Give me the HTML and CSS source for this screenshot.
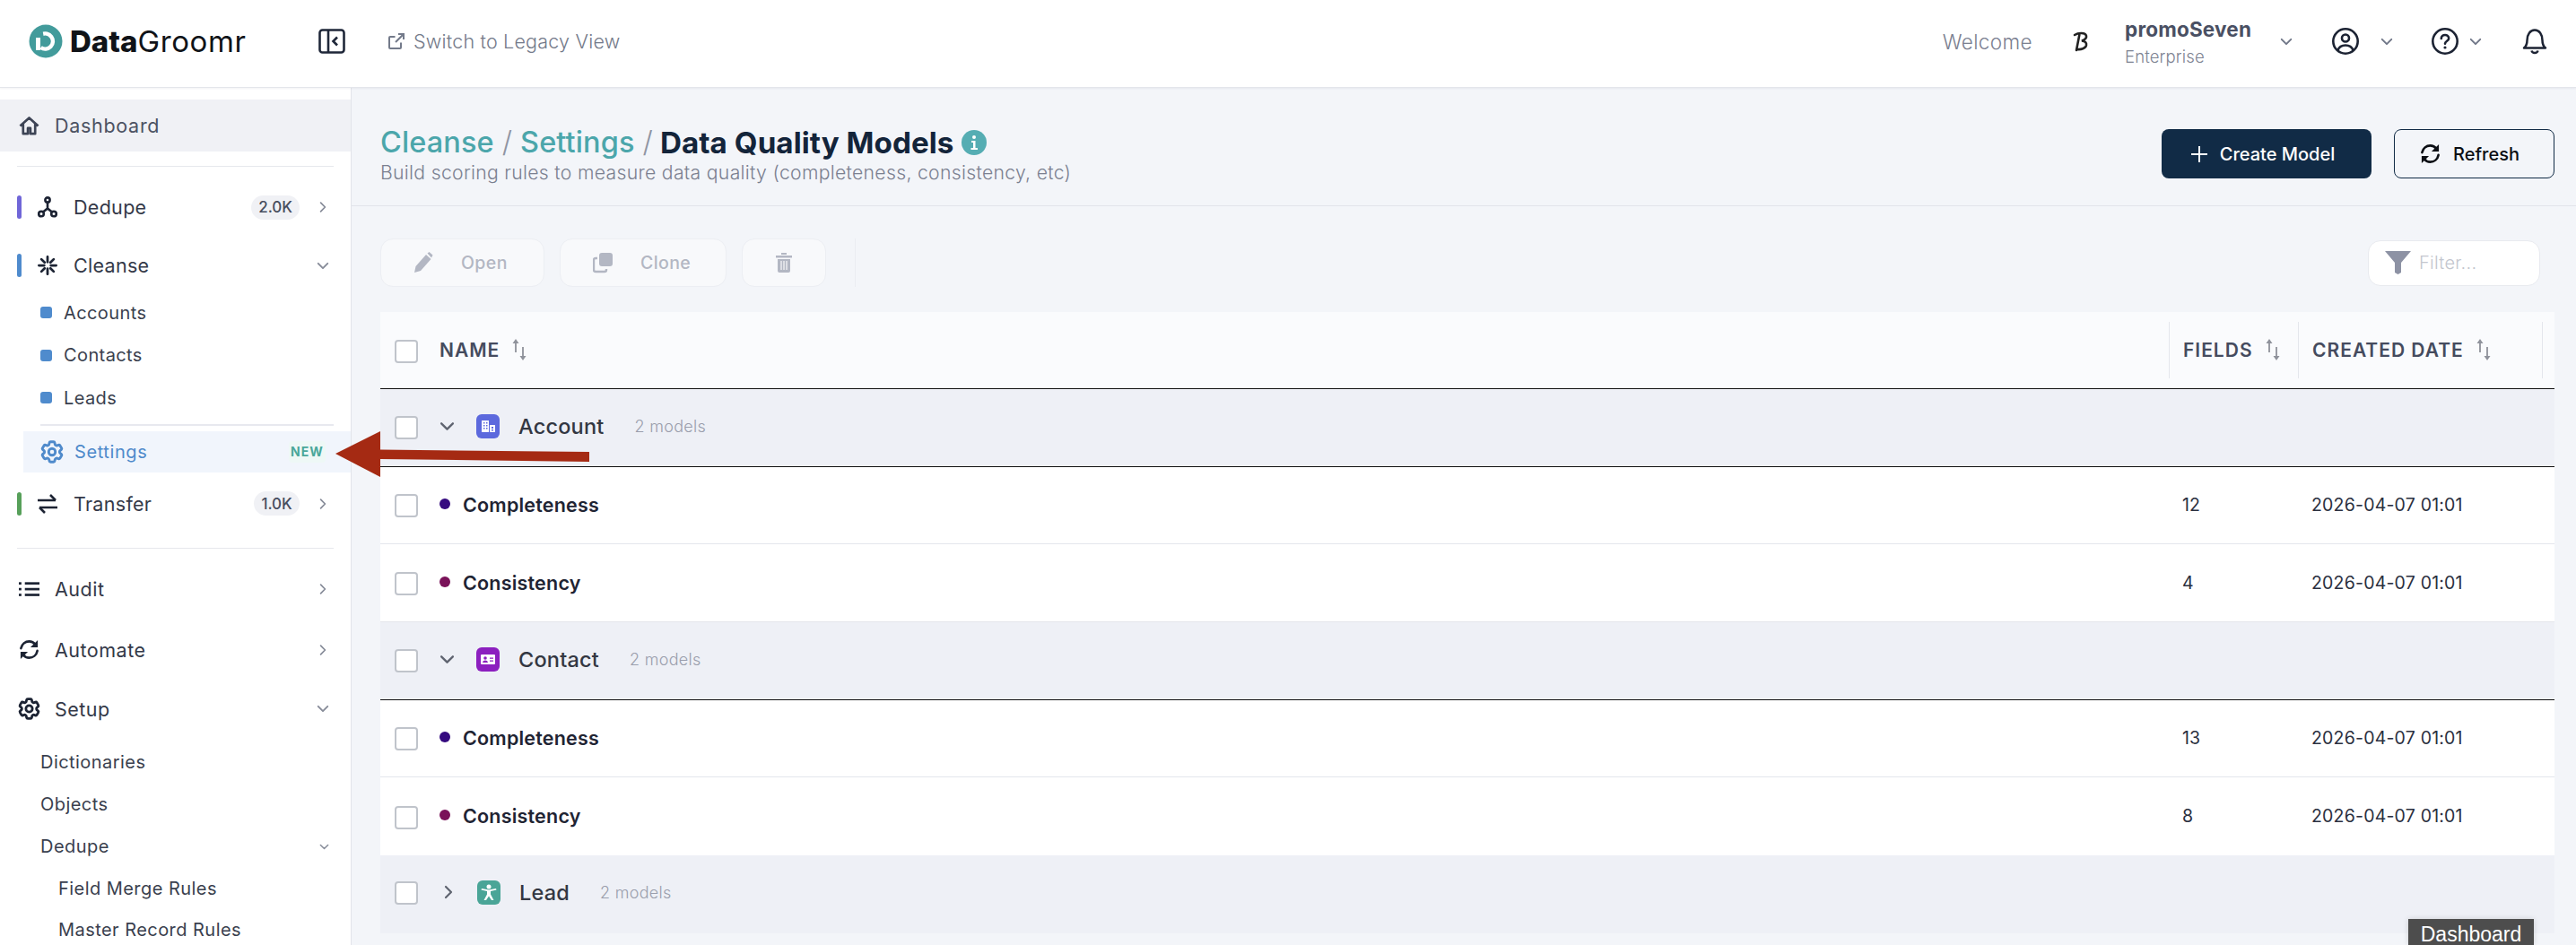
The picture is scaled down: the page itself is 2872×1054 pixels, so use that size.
FILE: index.html
```html
<!DOCTYPE html>
<html lang="en">
<head>
<meta charset="utf-8">
<title>DataGroomr</title>
<link rel="stylesheet" href="styles.css">
</head>
<body>
<svg class="sprite" aria-hidden="true">
  <symbol id="chev-d" viewBox="0 0 16 10"><path d="M2 2l6 6 6-6" fill="none" stroke="currentColor" stroke-width="2.2" stroke-linecap="round" stroke-linejoin="round"/></symbol>
  <symbol id="chev-r" viewBox="0 0 10 16"><path d="M2 2l6 6-6 6" fill="none" stroke="currentColor" stroke-width="2.2" stroke-linecap="round" stroke-linejoin="round"/></symbol>
  <symbol id="gear" viewBox="0 0 24 24"><g fill="none" stroke="currentColor" stroke-width="2.300" stroke-linejoin="round"><path d="M9.594 3.94c.09-.542.56-.94 1.11-.94h2.593c.55 0 1.02.398 1.11.94l.213 1.281c.063.374.313.686.645.87.074.04.147.083.22.127.325.196.72.257 1.075.124l1.217-.456a1.125 1.125 0 0 1 1.37.49l1.296 2.247a1.125 1.125 0 0 1-.26 1.431l-1.003.827c-.293.241-.438.613-.43.992a7.723 7.723 0 0 1 0 .255c-.008.378.137.75.43.991l1.004.827c.424.35.534.955.26 1.43l-1.298 2.247a1.125 1.125 0 0 1-1.369.491l-1.217-.456c-.355-.133-.75-.072-1.076.124a6.47 6.47 0 0 1-.22.128c-.331.183-.581.495-.644.869l-.213 1.281c-.09.543-.56.94-1.11.94h-2.594c-.55 0-1.019-.398-1.11-.94l-.213-1.281c-.062-.374-.312-.686-.644-.87a6.52 6.52 0 0 1-.22-.127c-.325-.196-.72-.257-1.076-.124l-1.217.456a1.125 1.125 0 0 1-1.369-.49l-1.297-2.247a1.125 1.125 0 0 1 .26-1.431l1.004-.827c.292-.24.437-.613.43-.991a6.932 6.932 0 0 1 0-.255c.007-.38-.138-.751-.43-.992l-1.004-.827a1.125 1.125 0 0 1-.26-1.43l1.297-2.247a1.125 1.125 0 0 1 1.37-.491l1.216.456c.356.133.751.072 1.076-.124.072-.044.146-.086.22-.128.332-.183.582-.495.644-.869l.214-1.28Z"/><circle cx="12" cy="12" r="3"/></g></symbol>
  <symbol id="sync" viewBox="0 0 24 24"><g fill="none" stroke="currentColor" stroke-width="2.800" stroke-linecap="round"><path d="M2.500 10.500C3.500 5.500 7.500 2.500 12 2.500c3 0 5.400 1.300 7 3.500"/><path d="M21.500 13.500c-1 5-5 8-9.500 8-3 0-5.400-1.300-7-3.500"/></g><path d="M22 1v8.500h-8.500zM2 23v-8.500h8.500z" fill="currentColor"/></symbol>
  <symbol id="sort" viewBox="0 0 18 24"><g fill="none" stroke="currentColor" stroke-width="1.800"><path d="M5 3v12M13 9v12"/></g><path d="M5 0l3.500 5h-7zM13 24l-3.500-5h7z" fill="currentColor"/></symbol>
  <symbol id="building" viewBox="0 0 26 27"><rect width="26" height="27" rx="6" fill="#5c69dd"/><path d="M6 7h8v13H6zM15 12h6v8h-6z" fill="#fff"/><path d="M8 9h1.500v1.500H8zm3 0h1.500v1.500H11zm-3 3h1.500v1.500H8zm3 0h1.500v1.500H11zm-3 3h1.500v1.500H8zm3 0h1.500v1.500H11zm6-1h2v2h-2zm0 3h2v1.500h-2z" fill="#5c69dd"/></symbol>
  <symbol id="card" viewBox="0 0 26 27"><rect width="26" height="27" rx="6" fill="#8c1fbf"/><rect x="5" y="8" width="16" height="11" rx="1" fill="#fff"/><circle cx="10" cy="12" r="1.800" fill="#8c1fbf"/><path d="M7 17c.4-2 1.500-2.600 3-2.600s2.600.6 3 2.600zM15 11.500h4v1.300h-4zM15 14.500h4v1.300h-4z" fill="#8c1fbf"/></symbol>
  <symbol id="person" viewBox="0 0 26 27"><rect width="26" height="27" rx="6" fill="#4aa597"/><circle cx="13" cy="7" r="2.500" fill="#fff"/><path d="M4.500 10.500l6.500 1.500v3.500L7.500 22h2.500l3-4.500 3 4.500h2.500L15 15.500V12l6.500-1.500-.5-1.500-8 1.500L5 9z" fill="#fff"/></symbol>
</svg>

<header class="topbar">
  <div class="brand">
    <svg class="logo" viewBox="0 0 38 38"><circle cx="19" cy="19" r="18.500" fill="#429b9b"/><path d="M14.500 11.500A8.500 8.500 0 1 1 13.500 26" fill="none" stroke="#fff" stroke-width="4.500"/><path d="M10.500 14v15" stroke="#fff" stroke-width="5"/><path d="M7 15l8.500-7.500L17 15z" fill="#429b9b"/></svg>
    <span class="brand-name"><b>Data</b>Groomr</span>
  </div>
  <svg class="toggle" viewBox="0 0 30 28"><rect x="1.500" y="1.500" width="27" height="25" rx="3" fill="none" stroke="#1f2739" stroke-width="2.600"/><path d="M11 1.500v25" stroke="#1f2739" stroke-width="2.600"/><path d="M21 9.500l-4.500 4.500 4.500 4.500" fill="none" stroke="#1f2739" stroke-width="2.600"/></svg>
  <a class="legacy">
    <svg class="legacy-icon" viewBox="0 0 20 20"><path d="M15 11.500V17a1 1 0 0 1-1 1H3a1 1 0 0 1-1-1V6a1 1 0 0 1 1-1h5.500M12 2h6v6M18 2l-9 9" fill="none" stroke="#737a8a" stroke-width="2"/></svg>
    Switch to Legacy View
  </a>
  <div class="top-right">
    <span class="welcome">Welcome</span>
    <svg class="org-logo" viewBox="0 0 20 24"><path d="M3 5c4-2.500 12-3 13 1 .5 2.500-2 4.500-5 5.500 4 .5 5.500 2 5 5-.7 3.500-6 5-10 4.500M8.500 4L5 22" fill="none" stroke="#222" stroke-width="2.600" stroke-linecap="round"/></svg>
    <div class="org"><span class="org-name">promoSeven</span><span class="org-plan">Enterprise</span></div>
    <svg class="chev top-chev org-chev"><use href="#chev-d"/></svg>
    <svg class="round-icon" viewBox="0 0 30 30"><g fill="none" stroke="#1c2333" stroke-width="2.600"><circle cx="15" cy="15" r="13.700"/><circle cx="15" cy="11.500" r="4"/><path d="M6.500 25c1.500-4 4.500-5.500 8.500-5.500s7 1.500 8.500 5.500"/></g></svg>
    <svg class="chev top-chev user-chev"><use href="#chev-d"/></svg>
    <svg class="round-icon help-icon" viewBox="0 0 30 30"><g fill="none" stroke="#1c2333" stroke-width="2.600"><circle cx="15" cy="15" r="13.700"/><path d="M10.800 12c0-2.500 2-4 4.200-4s4.200 1.400 4.200 3.800c0 3-4.200 3-4.200 6" stroke-linecap="round"/></g><circle cx="15" cy="22" r="1.600" fill="#1c2333"/></svg>
    <svg class="chev top-chev help-chev"><use href="#chev-d"/></svg>
    <svg class="bell" viewBox="0 0 28 30"><path d="M2 22.500c2.500-2 3.500-4 3.500-8.500C5.500 7 9 2.500 14 2.500S22.500 7 22.500 14c0 4.500 1 6.500 3.500 8.500zM10.500 25.500c.5 2 2 2.500 3.500 2.500s3-.5 3.500-2.500" fill="none" stroke="#1c2333" stroke-width="2.500" stroke-linejoin="round"/></svg>
  </div>
</header>

<div class="body">
  <nav class="sidebar">
    <div class="nav-top active">
      <svg class="top-icon home" viewBox="0 0 24 24"><path d="M1.500 12L12 2.500 22.500 12M5 9.500V21h5.500v-6.500h3V21H19V9.500" fill="none" stroke="#3d4455" stroke-width="2.800" stroke-linejoin="round"/></svg>
      <span>Dashboard</span>
    </div>
    <hr class="divider">

    <div class="nav-item first">
      <i class="bar bar-purple"></i>
      <svg class="item-icon" viewBox="0 0 22 24"><g fill="none" stroke="#1c2333" stroke-width="2.600"><circle cx="11" cy="4" r="2.600"/><circle cx="4" cy="19.500" r="2.800"/><circle cx="18" cy="19.500" r="2.800"/><path d="M11 7v6.500M6 17.500l5-4 5 4"/></g></svg>
      <span class="label">Dedupe</span>
      <span class="count">2.0K</span>
      <svg class="chev-r"><use href="#chev-r"/></svg>
    </div>
    <div class="nav-item second">
      <i class="bar bar-blue"></i>
      <svg class="item-icon" viewBox="0 0 24 24"><g stroke="#1c2333" stroke-width="3" stroke-linecap="round"><path d="M12 1.500v6.500M12 16v6.500M1.500 12H8M16 12h6.500M4.500 4.500l4 4M15.500 15.500l4 4M4.500 19.500l4-4M15.500 8.500l4-4"/></g></svg>
      <span class="label">Cleanse</span>
      <svg class="chev-d"><use href="#chev-d"/></svg>
    </div>
    <div class="sub-item first-sub"><i class="square"></i>Accounts</div>
    <div class="sub-item"><i class="square"></i>Contacts</div>
    <div class="sub-item"><i class="square"></i>Leads</div>
    <hr class="sub-divider">
    <div class="settings">
      <svg class="settings-icon"><use href="#gear"/></svg>
      <span class="label">Settings</span>
      <span class="new">NEW</span>
    </div>
    <div class="nav-item transfer">
      <i class="bar bar-green"></i>
      <svg class="item-icon" viewBox="0 0 22 22"><g fill="none" stroke="#1c2333" stroke-width="2.600"><path d="M0 7h20M22 15H2"/><path d="M14 1l6 6M8 21l-6-6"/></g></svg>
      <span class="label">Transfer</span>
      <span class="count count-t">1.0K</span>
      <svg class="chev-r"><use href="#chev-r"/></svg>
    </div>
    <hr class="divider divider-2">
    <div class="nav-main audit">
      <svg class="main-icon" viewBox="0 0 24 18"><g fill="#1c2333"><rect x="7" y="1" width="17" height="2.800"/><rect x="7" y="7.700" width="17" height="2.800"/><rect x="7" y="14.400" width="17" height="2.800"/><rect y="1" width="3" height="2.800"/><rect y="7.700" width="3" height="2.800"/><rect y="14.400" width="3" height="2.800"/></g></svg>
      <span class="label">Audit</span>
      <svg class="chev-r"><use href="#chev-r"/></svg>
    </div>
    <div class="nav-main">
      <svg class="main-icon sync"><use href="#sync"/></svg>
      <span class="label">Automate</span>
      <svg class="chev-r"><use href="#chev-r"/></svg>
    </div>
    <div class="nav-main nav-setup">
      <svg class="main-icon setup"><use href="#gear"/></svg>
      <span class="label">Setup</span>
      <svg class="chev-d"><use href="#chev-d"/></svg>
    </div>
    <div class="setup-list">
      <div class="setup-item">Dictionaries</div>
      <div class="setup-item">Objects</div>
      <div class="setup-item">Dedupe<svg class="chev-small"><use href="#chev-d"/></svg></div>
      <div class="setup-item deep">Field Merge Rules</div>
      <div class="setup-item deep">Master Record Rules</div>
    </div>
  </nav>

  <main class="main">
    <section class="page-head">
      <div class="head-text">
        <h1 class="title"><span class="crumb">Cleanse</span><span class="slash">/</span><span class="crumb">Settings</span><span class="slash">/</span><span class="current">Data Quality Models</span>
          <svg class="info" viewBox="0 0 28 28"><circle cx="14" cy="14" r="14" fill="#55adb3"/><circle cx="14" cy="8" r="2" fill="#fff"/><path d="M11 12h4.500v8H18v2h-7.500v-2H13v-6h-2z" fill="#fff"/></svg>
        </h1>
        <p class="subtitle">Build scoring rules to measure data quality (completeness, consistency, etc)</p>
      </div>
      <div class="head-actions">
        <button class="btn btn-primary"><svg class="plus" viewBox="0 0 18 18"><path d="M9 0v18M0 9h18" stroke="#fff" stroke-width="2"/></svg>Create Model</button>
        <button class="btn btn-outline"><svg class="refresh"><use href="#sync"/></svg>Refresh</button>
      </div>
    </section>

    <section class="toolbar">
      <button class="tool tool-open"><svg class="tool-icon" viewBox="0 0 22 24"><path d="M1 23l1.500-7L14 3l5.500 5L8 21zM15.500 1.500L17.500 0l4 3.500-1.500 3z" fill="#b3b7c3"/></svg>Open</button>
      <button class="tool tool-clone"><svg class="tool-icon" viewBox="0 0 22 22"><rect x="7" y="0" width="15" height="15" rx="3" fill="#b3b7c3"/><path d="M5 6H3a2 2 0 0 0-2 2v11a2 2 0 0 0 2 2h10a2 2 0 0 0 2-2v-1" fill="none" stroke="#b3b7c3" stroke-width="2.400"/></svg>Clone</button>
      <button class="tool tool-trash"><svg class="trash" viewBox="0 0 18 22"><path d="M0 3h18v2.500H0zM6 0h6v2H6zM2 7h14v13a2 2 0 0 1-2 2H4a2 2 0 0 1-2-2z" fill="#b3b7c3"/><path d="M6 9v10M9 9v10M12 9v10" stroke="#f8f9fb" stroke-width="1.200"/></svg></button>
      <i class="tool-sep"></i>
      <div class="filter"><svg class="funnel" viewBox="0 0 29 26"><path d="M0 0h29L18 13v11l-3.500 2-3.500-2V13z" fill="#8d92a4"/></svg><span>Filter...</span></div>
    </section>

    <section class="table">
      <div class="row head-row">
        <div class="c-name"><i class="check"></i><span>NAME</span><svg class="sort"><use href="#sort"/></svg></div>
        <div class="c-fields head-cell"><span>FIELDS</span><svg class="sort"><use href="#sort"/></svg></div>
        <div class="c-date head-cell"><span>CREATED DATE</span><svg class="sort"><use href="#sort"/></svg></div>
      </div>

      <div class="row group-row line-dark">
        <div class="c-name"><i class="check"></i><svg class="row-chev"><use href="#chev-d"/></svg><svg class="obj"><use href="#building"/></svg><span class="group-name">Account</span><span class="models">2 models</span></div>
      </div>
      <div class="row item-row">
        <div class="c-name"><i class="check"></i><i class="dot dot-a"></i><span class="model">Completeness</span></div>
        <div class="c-fields">12</div><div class="c-date">2026-04-07 01:01</div>
      </div>
      <div class="row item-row">
        <div class="c-name"><i class="check"></i><i class="dot dot-b"></i><span class="model">Consistency</span></div>
        <div class="c-fields">4</div><div class="c-date">2026-04-07 01:01</div>
      </div>

      <div class="row group-row line-dark">
        <div class="c-name"><i class="check"></i><svg class="row-chev"><use href="#chev-d"/></svg><svg class="obj"><use href="#card"/></svg><span class="group-name">Contact</span><span class="models">2 models</span></div>
      </div>
      <div class="row item-row">
        <div class="c-name"><i class="check"></i><i class="dot dot-a"></i><span class="model">Completeness</span></div>
        <div class="c-fields">13</div><div class="c-date">2026-04-07 01:01</div>
      </div>
      <div class="row item-row plain">
        <div class="c-name"><i class="check"></i><i class="dot dot-b"></i><span class="model">Consistency</span></div>
        <div class="c-fields">8</div><div class="c-date">2026-04-07 01:01</div>
      </div>

      <div class="row group-row">
        <div class="c-name c-last"><i class="check"></i><svg class="row-chev-r"><use href="#chev-r"/></svg><svg class="obj"><use href="#person"/></svg><span class="group-name">Lead</span><span class="models">2 models</span></div>
      </div>
    </section>
  </main>
</div>

<svg class="arrow" viewBox="0 0 290 52"><path d="M2 25L52 0v20.500L285 23v11L52 31v20z" fill="#a52a13"/></svg>
<div class="tooltip">Dashboard</div>
</body>
</html>
```

FILE: styles.css
```css
* { box-sizing: border-box; }
html, body { margin: 0; height: 1054px; overflow: hidden; }
body {
  font-family: Inter, "Liberation Sans", sans-serif;
  color: #2b3040;
  background: #f3f5f9;
  display: flex;
  flex-direction: column;
  position: relative;
}
.sprite { display: none; }
svg { display: block; flex: none; }
i { display: block; flex: none; }

/* top bar */
.topbar {
  height: 98px;
  flex: none;
  background: #fff;
  display: flex;
  align-items: center;
  padding-left: 32px;
  padding-bottom: 5px;
  border-bottom: 1px solid #e4e6eb;
  box-shadow: 0 1px 2px rgba(30, 40, 60, .06);
  position: relative;
  z-index: 2;
}
.brand { display: flex; align-items: center; width: 323px; }
.logo { width: 38px; height: 38px; }
.brand-name { font-size: 33px; margin-left: 8px; color: #101318; font-weight: 400; letter-spacing: .6px; }
.brand-name b { font-weight: 800; letter-spacing: 0; }
.toggle { width: 30px; height: 28px; }
.legacy { display: flex; align-items: center; margin-left: 47px; font-size: 21.5px; color: #747a8a; font-weight: 300; letter-spacing: .2px; }
.legacy-icon { width: 20px; height: 20px; margin-right: 9px; }
.top-right { margin-left: auto; display: flex; align-items: center; padding-right: 32px; }
.welcome { font-size: 22.5px; font-weight: 300; color: #7b8090; letter-spacing: .4px; }
.org-logo { width: 20px; height: 24px; margin-left: 44px; }
.org { display: flex; flex-direction: column; margin-left: 39px; width: 173px; }
.org-name { font-size: 22.5px; font-weight: 700; color: #4a5063; line-height: 26px; margin-bottom: 7px; letter-spacing: .2px; }
.org-plan { font-size: 18.5px; font-weight: 300; color: #7e8392; line-height: 20px; letter-spacing: .15px; }
.top-chev { width: 14px; height: 9px; color: #6f7687; }
.org-chev { margin-right: 44px; }
.round-icon { width: 30px; height: 30px; }
.user-chev { margin-left: 24px; }
.help-icon { margin-left: 43px; }
.help-chev { margin-left: 12px; }
.bell { width: 28px; height: 30px; margin-left: 45px; }

.body { flex: 1; display: flex; min-height: 0; }

/* sidebar */
.sidebar {
  width: 392px;
  flex: none;
  background: #fff;
  border-right: 1px solid #e2e4ea;
  padding-top: 13px;
  overflow: hidden;
  font-size: 21.5px;
  font-weight: 400;
}
.nav-top { height: 58px; display: flex; align-items: center; padding-left: 21px; background: #f0f1f5; color: #4c5262; letter-spacing: .7px; }
.top-icon { width: 23px; height: 23px; margin-right: 17px; }
.divider { height: 1px; border: 0; margin: 16px 19px 0; background: #e6e8ec; }
.divider-2 { margin-top: 26px; }
.nav-item { height: 46px; display: flex; align-items: center; padding-left: 19px; padding-right: 27px; position: relative; color: #343948; letter-spacing: .3px; }
.first { margin-top: 22px; }
.second { margin-top: 19px; }
.transfer { margin-top: 12px; }
.bar { width: 5px; height: 26px; border-radius: 3px; margin-right: 18px; }
.bar-purple { background: #7066d8; }
.bar-blue { background: #4f8bcd; }
.bar-green { background: #57a05a; }
.item-icon { width: 22px; height: 24px; margin-right: 18px; }
.label { flex: 1; }
.count { background: #f0f1f5; border-radius: 14px; height: 27px; width: 54px; display: flex; align-items: center; justify-content: center; font-size: 17px; font-weight: 500; color: #474d5e; margin-right: 22px; letter-spacing: -.1px; }
.count-t { width: 51px; }
.chev-r { width: 8px; height: 14px; color: #878c99; }
.chev-d { width: 14px; height: 9px; color: #878c99; margin-right: -3px; }
.sub-item { height: 47.5px; display: flex; align-items: center; padding-left: 45px; font-size: 20px; font-weight: 400; color: #3a3f4e; letter-spacing: .4px; }
.first-sub { margin-top: 6px; }
.square { width: 13px; height: 13px; border-radius: 3px; background: #4f8bcd; margin-right: 13px; }
.sub-divider { height: 2px; border: 0; margin: 5px 19px 6px 45px; background: #e8e9ef; }
.settings { height: 46px; margin-left: 26px; background: #f1f5fc; display: flex; align-items: center; padding-left: 17px; padding-right: 28px; font-size: 20px; color: #4f8acb; letter-spacing: .6px; }
.settings-icon { width: 30px; height: 30px; margin-right: 10px; }
.new { width: 41px; height: 24px; background: #eef8f6; display: flex; align-items: center; justify-content: center; font-size: 14px; font-weight: 700; color: #4aa79a; letter-spacing: 1.1px; border-radius: 4px; }
.nav-main { height: 46px; margin-top: 22px; display: flex; align-items: center; padding-left: 21px; padding-right: 27px; color: #343948; letter-spacing: .5px; }
.nav-setup { margin-top: 20px; }
.main-icon { width: 23px; height: 23px; margin-right: 17px; color: #1c2333; }
.audit .main-icon { height: 18px; }
.main-icon.setup { width: 29px; height: 29px; margin-left: -3px; margin-right: 14px; }
.setup-list { margin-top: 13px; }
.setup-item { height: 47px; display: flex; align-items: center; justify-content: space-between; padding-left: 45px; padding-right: 24px; font-size: 20px; color: #3a3f4e; letter-spacing: .45px; }
.deep { padding-left: 65px; height: 46px; }
.chev-small { width: 11px; height: 7px; color: #878c99; }

/* main */
.main { flex: 1; min-width: 0; padding-right: 24px; overflow: hidden; }
.page-head { height: 132px; margin-right: -24px; padding: 0 24px 0 32px; border-bottom: 1px solid #e2e4ea; display: flex; align-items: center; justify-content: space-between; }
.head-text { margin-top: 16px; }
.title { display: flex; align-items: center; margin: 0; font-size: 32.5px; font-weight: 500; line-height: 38px; padding-top: 2px; }
.crumb { color: #4ba6ab; letter-spacing: .1px; }
.slash { color: #8f94a2; font-weight: 300; margin: 0 9px; }
.current { color: #13243a; font-weight: 700; font-size: 33.2px; margin-left: -1px; letter-spacing: .05px; }
.info { width: 28px; height: 28px; margin-left: 9px; }
.subtitle { margin: 1px 0 0; font-size: 21.2px; font-weight: 300; color: #7b8090; letter-spacing: .3px; line-height: 27px; }
.head-actions { display: flex; gap: 25px; margin-top: 16px; }
.btn { height: 55px; border-radius: 8px; display: flex; align-items: center; justify-content: center; font-family: inherit; font-size: 20px; font-weight: 500; padding: 0; }
.btn-primary { width: 234px; background: #112b46; border: 0; color: #fff; padding-right: 8px; }
.btn-outline { width: 179px; background: transparent; border: 1px solid #112b46; color: #0c0f14; padding-right: 10px; }
.plus { width: 18px; height: 18px; margin-right: 14px; }
.refresh { width: 23px; height: 23px; margin-right: 14px; color: #0c0f14; }

.toolbar { height: 54px; margin-top: 36px; padding-left: 32px; display: flex; align-items: center; }
.tool { height: 54px; background: #f8f9fb; border: 1px solid #eceef3; border-radius: 14px; display: flex; align-items: center; font-family: inherit; font-size: 19.5px; color: #b3b7c3; font-weight: 500; padding: 0; letter-spacing: .4px; }
.tool-open { width: 183px; padding-left: 36px; }
.tool-clone { width: 186px; margin-left: 17px; padding-left: 36px; }
.tool-trash { width: 94px; margin-left: 17px; justify-content: center; }
.tool-icon { width: 22px; height: 24px; margin-right: 31px; }
.trash { width: 18px; height: 22px; }
.tool-sep { width: 1px; height: 54px; background: #eaecf1; margin-left: 32px; }
.filter { margin-left: auto; margin-right: 16px; width: 192px; height: 51px; background: #fff; border: 1px solid #e8eaef; border-radius: 14px; display: flex; align-items: center; padding-left: 18px; font-size: 20px; font-weight: 300; color: #c3c6ce; letter-spacing: .3px; }
.funnel { width: 29px; height: 26px; margin-right: 9px; }

.table { margin: 28px 0 0 32px; }
.row { height: 86.670px; display: flex; align-items: center; padding-left: 16px; border-bottom: 1px solid #e4e6ec; background: #fff; }
.head-row { height: 86px; background: #fafbfd; border-bottom: 1px solid #111; font-size: 21px; font-weight: 600; color: #454b5e; letter-spacing: 1px; }
.group-row { background: #eef0f6; border-bottom: 0; }
.group-row .c-name { padding-bottom: 2px; }
.group-row .c-last { padding-bottom: 4px; }
.line-dark { border-bottom: 1px solid #111; }
.plain { border-bottom: 0; }
.c-name { flex: 1; display: flex; align-items: center; height: 100%; }
.c-fields { width: 144px; height: 100%; display: flex; align-items: center; padding-left: 15px; font-size: 19.5px; color: #2b3040; }
.c-date { width: 286px; height: 100%; display: flex; align-items: center; padding-left: 15px; font-size: 19.5px; color: #2b3040; letter-spacing: .2px; }
.head-cell { height: 63px; border-left: 1px solid #e4e6ec; color: #454b5e; font-size: 21px; letter-spacing: 1px; }
.c-date.head-cell { border-right: 1px solid #e4e6ec; width: 273px; margin-right: 13px; }
.head-row .c-name span { margin-left: 24px; }
.sort { width: 18px; height: 24px; color: #8f929b; margin-left: 13px; margin-top: -2px; }
.check { width: 26px; height: 26px; background: #fff; border: 2.500px solid #c0c4cb; border-radius: 4px; margin-top: 2px; }
.row-chev { width: 17px; height: 11px; color: #5f6470; margin-left: 24px; }
.row-chev-r { width: 10px; height: 16px; color: #5f6470; margin: 0 3px 0 29px; }
.obj { width: 26px; height: 27px; margin-left: 24px; }
.group-name { font-size: 23.5px; font-weight: 500; color: #333742; margin-left: 21px; letter-spacing: .2px; }
.models { font-size: 18px; font-weight: 300; color: #9a9eac; margin-left: 34px; letter-spacing: .3px; }
.dot { width: 12px; height: 12px; border-radius: 50%; margin-left: 24px; margin-top: -3px; }
.dot-a { background: #350a7f; }
.dot-b { background: #7a1259; }
.model { font-size: 21.5px; font-weight: 600; color: #1f2433; margin-left: 14px; margin-top: -1px; letter-spacing: .2px; }
.item-row .c-fields, .item-row .c-date { padding-bottom: 1px; }

/* overlays */
.arrow { position: absolute; left: 372px; top: 481px; width: 290px; height: 52px; z-index: 5; }
.tooltip { position: absolute; left: 2685px; top: 1025px; width: 140px; height: 29px; background: #4d4d4d; color: #fff; font-family: "Liberation Sans", sans-serif; font-size: 23px; text-align: center; line-height: 35px; overflow: hidden; box-shadow: 0 0 6px rgba(0, 0, 0, .15); z-index: 6; }
```
